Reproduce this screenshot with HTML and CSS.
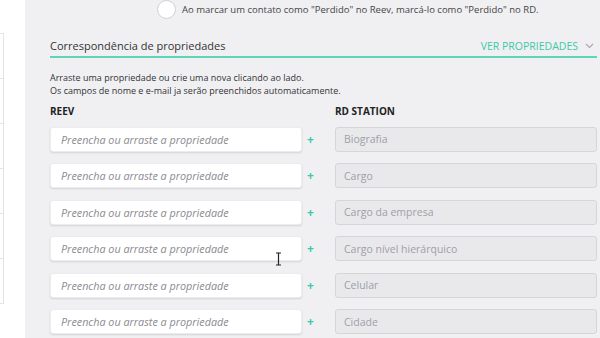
FILE: index.html
```html
<!DOCTYPE html>
<html lang="pt-BR">
<head>
    <meta charset="UTF-8">
    <meta name="viewport" content="width=device-width, initial-scale=1.0">
    <title>Integração RD Station</title>
    <link rel="stylesheet" href="styles.css">
</head>
<body>
    <div class="page">
        <!-- left menu strip -->
        <div class="sidebar">
            <div class="side-list">
                <div class="side-item"></div>
                <div class="side-item"></div>
                <div class="side-item"></div>
                <div class="side-item"></div>
                <div class="side-item"></div>
                <div class="side-item"></div>
                <div class="side-item"></div>
            </div>
        </div>

        <div class="content">
            <label class="option">
                <span class="radio"></span>
                <span>Ao marcar um contato como "Perdido" no Reev, marcá-lo como "Perdido" no RD.</span>
            </label>

            <div class="section-head">
                <span class="section-title">Correspondência de propriedades</span>
                <a href="#" class="toggle">VER PROPRIEDADES
                    <svg width="9" height="6" viewBox="0 0 9 6"><path d="M1 1l3.5 3.5L8 1" fill="none" stroke="#a9a9b0" stroke-width="1.2"/></svg>
                </a>
            </div>

            <p class="hint">Arraste uma propriedade ou crie uma nova clicando ao lado.<br>Os campos de nome e e-mail ja serão preenchidos automaticamente.</p>

            <div class="map">
                <div class="col-title">REEV</div>
                <div></div>
                <div class="col-title">RD STATION</div>

                <input class="field" placeholder="Preencha ou arraste a propriedade">
                <span class="plus">+</span>
                <div class="target">Biografia</div>

                <input class="field" placeholder="Preencha ou arraste a propriedade">
                <span class="plus">+</span>
                <div class="target">Cargo</div>

                <input class="field" placeholder="Preencha ou arraste a propriedade">
                <span class="plus">+</span>
                <div class="target">Cargo da empresa</div>

                <input class="field" placeholder="Preencha ou arraste a propriedade">
                <span class="plus">+</span>
                <div class="target">Cargo nível hierárquico</div>

                <input class="field" placeholder="Preencha ou arraste a propriedade">
                <span class="plus">+</span>
                <div class="target">Celular</div>

                <input class="field" placeholder="Preencha ou arraste a propriedade">
                <span class="plus">+</span>
                <div class="target">Cidade</div>
            </div>

            <!-- mouse cursor captured in the screenshot -->
            <svg class="cursor" width="7" height="14" viewBox="0 0 7 14"><path d="M1 1h2l.5.5.5-.5h2M3.5 1.5v11M1 13h2l.5-.5.5.5h2" fill="none" stroke="#222" stroke-width="1.2"/></svg>
        </div>
    </div>
</body>
</html>
```

FILE: styles.css
```css
* {
    box-sizing: border-box;
}

body {
    margin: 0;
    font-family: "Open Sans", Arial, sans-serif;
    background-color: #f0f0f3;
    color: #333;
}

.page {
    display: flex;
    height: 338px;
    overflow: hidden;
}

.sidebar {
    width: 25px;
    flex-shrink: 0;
    background: #fff;
}

.side-list {
    width: 4px;
    margin-top: 33px;
    border-right: 1px solid #e4e4e8;
}

.side-item {
    height: 45px;
    border-top: 1px solid #e4e4e8;
}

.side-item:last-child {
    height: 0;
}

.content {
    position: relative;
    flex: 1;
    padding: 0 3px 0 25px;
}

.option {
    display: flex;
    align-items: center;
    gap: 6px;
    margin-left: 107px;
    height: 19px;
    font-size: 9.5px;
    color: #444;
}

.radio {
    width: 19px;
    height: 19px;
    border-radius: 50%;
    background: #fff;
    border: 1px solid #cfcfd6;
}

.section-head {
    display: flex;
    justify-content: space-between;
    align-items: center;
    margin-top: 19px;
    padding-bottom: 3px;
    border-bottom: 2px solid #5fd5b8;
}

.section-title {
    font-size: 11px;
    color: #333;
}

.toggle {
    display: flex;
    align-items: center;
    gap: 7px;
    font-size: 10.5px;
    color: #3cc9a5;
    text-decoration: none;
    padding-right: 3px;
}

.hint {
    margin: 13px 0 0;
    font-size: 9px;
    line-height: 13px;
    color: #333;
}

.map {
    display: grid;
    grid-template-columns: 252px 33px 1fr;
    row-gap: 11.5px;
    align-items: center;
    margin-top: 7px;
}

.col-title {
    font-size: 10px;
    font-weight: bold;
    color: #222;
    margin-bottom: -3px;
}

.field {
    height: 25px;
    width: 100%;
    padding: 0 10px;
    border: 1px solid #ececf0;
    border-radius: 3px;
    background: #fff;
    box-shadow: 0 1px 2px rgba(0, 0, 0, 0.12);
    font-family: inherit;
    font-size: 10.8px;
}

.field::placeholder {
    font-style: italic;
    color: #8a8a90;
}

.plus {
    font-size: 12px;
    font-weight: bold;
    color: #3cc9a5;
    padding-left: 5px;
}

.target {
    height: 25px;
    display: flex;
    align-items: center;
    padding: 0 8px;
    background: #e9e9ec;
    border: 1px solid #d5d5da;
    border-radius: 3px;
    font-size: 10.5px;
    color: #a0a0a6;
}

.cursor {
    position: absolute;
    left: 250px;
    top: 252px;
}
```
